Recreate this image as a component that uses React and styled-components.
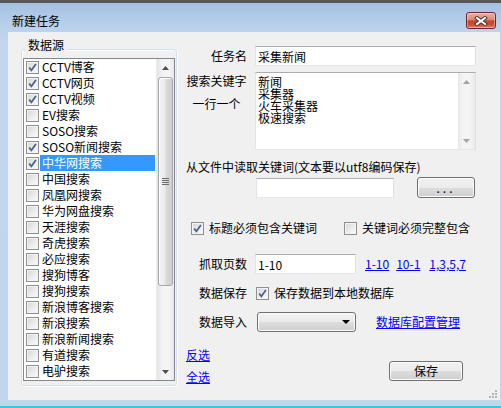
import React from "react";
import styled, { createGlobalStyle } from "styled-components";

const sources = [
	{ name: "CCTV博客", checked: true },
	{ name: "CCTV网页", checked: true },
	{ name: "CCTV视频", checked: true },
	{ name: "EV搜索" },
	{ name: "SOSO搜索" },
	{ name: "SOSO新闻搜索", checked: true },
	{ name: "中华网搜索", checked: true, selected: true },
	{ name: "中国搜索" },
	{ name: "凤凰网搜索" },
	{ name: "华为网盘搜索" },
	{ name: "天涯搜索" },
	{ name: "奇虎搜索" },
	{ name: "必应搜索" },
	{ name: "搜狗博客" },
	{ name: "搜狗搜索" },
	{ name: "新浪博客搜索" },
	{ name: "新浪搜索" },
	{ name: "新浪新闻搜索" },
	{ name: "有道搜索" },
	{ name: "电驴搜索" },
];

const keywords = ["新闻", "采集器", "火车采集器", "极速搜索"];

const GlobalStyle = createGlobalStyle`
	html, body {
		margin: 0;
		padding: 0;
		background: #4a4a4a;
	}
	body {
		font-family: "Noto Sans CJK SC", "Liberation Sans", sans-serif;
		font-size: 12px;
		color: #000;
	}
`;

const Window = styled.div`
	width: 501px;
	height: 408px;
	box-sizing: border-box;
	display: flex;
	flex-direction: column;
	border-top: 3px solid #575757;
	border-bottom: 2px solid #3ec3e4;
	padding: 0 1px 6px 8px;
	background: linear-gradient(#a4c0e1 0px, #b8d0eb 22px, #c2d7ee 40px, #c0d6ed 100%);
`;

const TitleBar = styled.div`
	height: 29px;
	box-sizing: border-box;
	display: flex;
	align-items: flex-start;
	justify-content: space-between;
	padding: 9px 4px 0 4px;
`;

const Title = styled.span`
	line-height: 17px;
	font-size: 12px;
`;

const CloseButton = styled.div`
	width: 30px;
	height: 17px;
	box-sizing: border-box;
	display: grid;
	place-items: center;
	border: 1px solid #6b2a26;
	border-radius: 3px;
	background: linear-gradient(#eab0a3 0%, #dc8a78 45%, #c7462f 52%, #c95038 80%, #de8d78 100%);
	box-shadow: inset 0 0 0 1px rgba(255, 255, 255, 0.35);
`;

const Client = styled.div`
	flex: 1;
	position: relative;
	display: flex;
	align-items: flex-start;
	padding: 0 24px 0 13px;
	background: #f0f0f0;
`;

const GroupBox = styled.div`
	position: relative;
	margin-top: 17px;
	width: 156px;
	height: 337px;
	box-sizing: border-box;
	padding: 8px 1px 4px 1px;
	border: 1px solid #d5dfe5;
	border-radius: 3px;
	box-shadow: inset 1px 1px 0 #fff, 1px 1px 0 #fff;
`;

const Legend = styled.span`
	position: absolute;
	top: -13px;
	left: 3px;
	padding: 0 3px;
	line-height: 16px;
	background: #f0f0f0;
`;

const ListBox = styled.div`
	display: flex;
	height: 323px;
	box-sizing: border-box;
	border: 1px solid #828790;
	background: #fff;
`;

const Items = styled.div`
	flex: 1;
	overflow: hidden;
`;

const Item = styled.div`
	height: 16px;
	display: flex;
	align-items: center;
	padding-left: 2px;
	margin-right: 1px;
`;

const ItemText = styled.span`
	flex: 1;
	margin-left: 1px;
	padding-left: 2px;
	line-height: 16px;
	white-space: nowrap;
	background: ${(p) => (p.$selected ? "#3399ff" : "transparent")};
	color: ${(p) => (p.$selected ? "#fff" : "#000")};
`;

const ScrollBar = styled.div`
	width: 17px;
	display: flex;
	flex-direction: column;
	align-items: center;
	background: linear-gradient(90deg, #e3e3e3, #f3f3f3 30%, #f5f5f5 70%, #e8e8e8);
	border-left: 1px solid #ececec;
`;

const ArrowBox = styled.div`
	width: 17px;
	height: 17px;
	display: grid;
	place-items: center;
	flex: none;
`;

const Thumb = styled.div`
	width: 15px;
	height: 209px;
	margin-top: 1px;
	box-sizing: border-box;
	display: grid;
	place-items: center;
	border: 1px solid #a7a7a7;
	border-radius: 3px;
	background: linear-gradient(90deg, #f4f4f4, #eaeaea 45%, #d9d9d9 55%, #cfcfcf);
	box-shadow: inset 1px 1px 0 #fff;
`;

const Spacer = styled.div`
	flex: 1;
`;

const CheckFrame = styled.span`
	width: 13px;
	height: 13px;
	flex: none;
	box-sizing: border-box;
	display: grid;
	place-items: center;
	border: 1px solid #8e8f8f;
	background: linear-gradient(135deg, #d4d4d4 0%, #ececec 55%, #fdfdfd 100%);
	box-shadow: inset 0 0 0 1px #f4f4f4;
`;

const Form = styled.div`
	flex: 1;
	margin-left: 9px;
	padding-top: 14px;
	display: flex;
	flex-direction: column;
`;

const Row = styled.div`
	display: flex;
	align-items: ${(p) => p.$align || "center"};
	margin-top: ${(p) => p.$top || 0}px;
	padding-left: ${(p) => p.$indent || 0}px;
`;

const Label = styled.span`
	width: 61px;
	margin-right: 8px;
	flex: none;
	text-align: right;
	line-height: 16px;
	white-space: nowrap;
`;

const LabelStack = styled.div`
	width: 61px;
	margin-right: 8px;
	flex: none;
	display: flex;
	flex-direction: column;
	align-items: center;
	line-height: 18px;
	gap: 5px;
`;

const TextInput = styled.input`
	width: ${(p) => p.$w}px;
	height: 20px;
	margin-left: ${(p) => p.$left || 0}px;
	box-sizing: border-box;
	padding: 0 2px;
	border: 1px solid;
	border-color: #abadb3 #dbdfe6 #e3e9ef #e2e3ea;
	background: #fff;
	font: 12px "Noto Sans CJK SC", "Liberation Sans", sans-serif;
	color: #000;
	outline: none;
`;

const KeywordBox = styled.div`
	width: 221px;
	height: 78px;
	box-sizing: border-box;
	display: flex;
	border: 1px solid;
	border-color: #abadb3 #dbdfe6 #e3e9ef #e2e3ea;
	background: #fff;
`;

const KeywordLines = styled.div`
	flex: 1;
	padding: 3px 0 0 2px;
	line-height: 12px;
`;

const BoxScroll = styled.div`
	width: 17px;
	display: flex;
	flex-direction: column;
	background: linear-gradient(90deg, #e8e8e8, #f4f4f4 30%, #f4f4f4 70%, #eaeaea);
`;

const Plain = styled.span`
	line-height: 16px;
	white-space: nowrap;
	margin-left: ${(p) => p.$left || 0}px;
`;

const Button = styled.div`
	width: ${(p) => p.$w}px;
	height: ${(p) => p.$h}px;
	margin-left: ${(p) => p.$left || 0}px;
	box-sizing: border-box;
	display: grid;
	place-items: center;
	border: 1px solid #707070;
	border-radius: 3px;
	background: linear-gradient(#f2f2f2 0%, #ebebeb 50%, #dddddd 51%, #cfcfcf 100%);
	box-shadow: inset 0 0 0 1px #fcfcfc;
	line-height: 16px;
	letter-spacing: ${(p) => p.$spacing || 0}px;
`;

const CheckItem = styled.div`
	display: flex;
	align-items: center;
	gap: 5px;
	margin-left: ${(p) => p.$left || 0}px;
	line-height: 16px;
	white-space: nowrap;
`;

const Link = styled.a`
	color: #0000ff;
	text-decoration: underline;
	line-height: 16px;
	white-space: nowrap;
	margin-left: ${(p) => p.$left || 0}px;
	cursor: pointer;
`;

const Combo = styled.div`
	width: 99px;
	height: 20px;
	margin-left: 2px;
	box-sizing: border-box;
	display: flex;
	align-items: center;
	justify-content: flex-end;
	padding-right: 5px;
	border: 1px solid #707070;
	border-radius: 3px;
	background: linear-gradient(#f2f2f2 0%, #ebebeb 50%, #dddddd 51%, #cfcfcf 100%);
	box-shadow: inset 0 0 0 1px #fcfcfc;
`;

const BottomRow = styled.div`
	display: flex;
	align-items: flex-start;
	margin-top: 15px;
`;

const LinkStack = styled.div`
	display: flex;
	flex-direction: column;
	align-items: flex-start;
	gap: 6px;
`;

const SaveButton = styled(Button)`
	margin-left: auto;
	margin-top: 14px;
	margin-right: 13px;
`;

const Grip = styled.svg`
	position: absolute;
	right: 3px;
	bottom: 2px;
`;

const Check = ({ checked }) => (
	<CheckFrame>
		{checked && (
			<svg width="9" height="9" viewBox="0 0 9 9">
				<path d="M1.2 4.6 L3.4 7.3 L7.9 1" fill="none" stroke="#4a5f96" strokeWidth="1.7" />
			</svg>
		)}
	</CheckFrame>
);

const Arrow = ({ down, color = "#4d4d4d" }) => (
	<svg width="7" height="4" viewBox="0 0 7 4">
		<path d={down ? "M0 0 H7 L3.5 4 Z" : "M0 4 H7 L3.5 0 Z"} fill={color} />
	</svg>
);

const App = () => {
	return (
		<>
			<GlobalStyle />
			<Window>
				<TitleBar>
					<Title>新建任务</Title>
					<CloseButton>
						<svg width="14" height="10" viewBox="0 0 14 10">
							<path d="M3 2 L11 8 M11 2 L3 8" stroke="#4a3434" strokeWidth="4" strokeLinecap="square" />
							<path d="M3 2 L11 8 M11 2 L3 8" stroke="#fff" strokeWidth="2" strokeLinecap="square" />
						</svg>
					</CloseButton>
				</TitleBar>
				<Client>
					<GroupBox>
						<Legend>数据源</Legend>
						<ListBox>
							<Items>
								{sources.map((s) => (
									<Item key={s.name}>
										<Check checked={s.checked} />
										<ItemText $selected={s.selected}>{s.name}</ItemText>
									</Item>
								))}
							</Items>
							<ScrollBar>
								<ArrowBox>
									<Arrow />
								</ArrowBox>
								<Thumb>
									<svg width="7" height="7" viewBox="0 0 7 7">
										<path d="M0 0.5 H7 M0 2.5 H7 M0 4.5 H7 M0 6.5 H7" stroke="#6b6b6b" strokeWidth="1" />
									</svg>
								</Thumb>
								<Spacer />
								<ArrowBox>
									<Arrow down />
								</ArrowBox>
							</ScrollBar>
						</ListBox>
					</GroupBox>

					<Form>
						<Row>
							<Label>任务名</Label>
							<TextInput $w={221} defaultValue="采集新闻" readOnly />
						</Row>
						<Row $top={6} $align="flex-start">
							<LabelStack>
								<span>搜索关键字</span>
								<span>一行一个</span>
							</LabelStack>
							<KeywordBox>
								<KeywordLines>
									{keywords.map((k) => (
										<div key={k}>{k}</div>
									))}
								</KeywordLines>
								<BoxScroll>
									<ArrowBox>
										<Arrow color="#a3a3a3" />
									</ArrowBox>
									<Spacer />
									<ArrowBox>
										<Arrow down color="#a3a3a3" />
									</ArrowBox>
								</BoxScroll>
							</KeywordBox>
						</Row>
						<Row $top={9}>
							<Plain>从文件中读取关键词(文本要以utf8编码保存)</Plain>
						</Row>
						<Row $top={2}>
							<TextInput $w={138} $left={70} readOnly />
							<Button $w={58} $h={21} $left={23} $spacing={3}>
								...
							</Button>
						</Row>
						<Row $top={22} $indent={5}>
							<CheckItem>
								<Check checked />
								<span>标题必须包含关键词</span>
							</CheckItem>
							<CheckItem $left={27}>
								<Check />
								<span>关键词必须完整包含</span>
							</CheckItem>
						</Row>
						<Row $top={18}>
							<Label>抓取页数</Label>
							<TextInput $w={101} defaultValue="1-10" readOnly />
							<Link $left={9}>1-10</Link>
							<Link $left={7}>10-1</Link>
							<Link $left={9}>1,3,5,7</Link>
						</Row>
						<Row $top={11}>
							<Label>数据保存</Label>
							<CheckItem $left={1}>
								<Check checked />
								<span>保存数据到本地数据库</span>
							</CheckItem>
						</Row>
						<Row $top={11}>
							<Label>数据导入</Label>
							<Combo>
								<svg width="8" height="4" viewBox="0 0 8 4">
									<path d="M0 0 H8 L4 4 Z" fill="#000" />
								</svg>
							</Combo>
							<Link $left={20}>数据库配置管理</Link>
						</Row>
						<BottomRow>
							<LinkStack>
								<Link>反选</Link>
								<Link>全选</Link>
							</LinkStack>
							<SaveButton $w={74} $h={20}>
								保存
							</SaveButton>
						</BottomRow>
					</Form>

					<Grip width="9" height="9" viewBox="0 0 9 9">
						<g fill="#b5b5b5">
							<rect x="7" y="1" width="2" height="2" />
							<rect x="4" y="4" width="2" height="2" />
							<rect x="7" y="4" width="2" height="2" />
							<rect x="1" y="7" width="2" height="2" />
							<rect x="4" y="7" width="2" height="2" />
							<rect x="7" y="7" width="2" height="2" />
						</g>
					</Grip>
				</Client>
			</Window>
		</>
	);
};

export default App;
